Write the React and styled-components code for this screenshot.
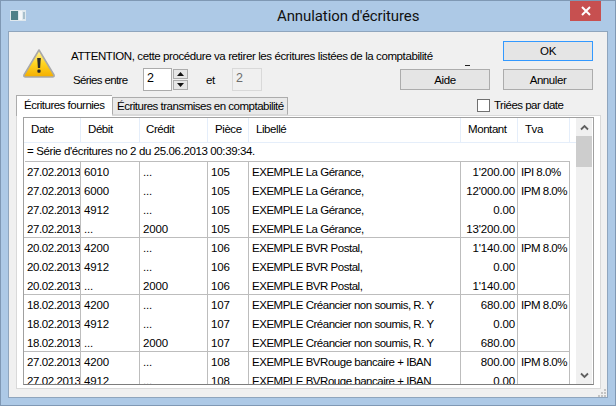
import React from "react";
import styled, { createGlobalStyle } from "styled-components";

const GlobalStyle = createGlobalStyle`
  html, body {
    margin: 0;
    padding: 0;
    background: #fff;
  }
  body {
    font-family: "Liberation Sans", Arial, sans-serif;
    font-size: 11.5px;
    letter-spacing: -0.42px;
    color: #000;
  }
`;

const COLUMNS = "57px 59px 68px 41px 212px 57px 52px";

// letter spacing per column, the dates have to fit their 57px column
const TRACKING = ["-0.4px", "-0.15px", "-0.15px", "-0.15px", "-0.48px", "-0.15px", "-0.48px"];

const Window = styled.div`
  box-sizing: border-box;
  width: 616px;
  height: 406px;
  display: flex;
  flex-direction: column;
  background: #adc9e6;
  border: 1px solid #7f98b4;
  overflow: hidden;
`;

const TitleBar = styled.div`
  height: 30px;
  flex: none;
  display: flex;
  align-items: flex-start;
  padding-left: 9px;
`;

const WindowTitle = styled.div`
  margin: 5px 0 0 251px;
  font-family: Roboto, sans-serif;
  font-size: 15px;
  letter-spacing: -0.1px;
  line-height: 20px;
  color: #111;
  width: 317px;
`;

const CloseButton = styled.div`
  width: 31px;
  height: 20px;
  background: #c75050;
  display: flex;
  align-items: center;
  justify-content: center;
  margin-left: -24px;
`;

const Client = styled.div`
  flex: 1;
  margin: 0 7px 7px;
  display: flex;
  flex-direction: column;
  background: #f0f0f0;
  border: 1px solid #8fa5bd;
  min-height: 0;
`;

const Head = styled.div`
  box-sizing: border-box;
  height: 63px;
  flex: none;
  display: flex;
  padding: 17px 0 0 14px;
`;

const WarningSlot = styled.div`
  width: 32px;
  margin-right: 16px;
`;

const Message = styled.div`
  width: 329px;
  margin-top: -1px;
`;

const MessageText = styled.div`
  line-height: 16px;
  height: 20px;
  white-space: nowrap;
  letter-spacing: -0.4px;
`;

const SeriesRow = styled.div`
  display: flex;
  align-items: center;
  height: 23px;
`;

const SeriesLabel = styled.span`
  width: 72px;
  padding-left: 2px;
  flex: none;
  box-sizing: border-box;
  letter-spacing: -0.62px;
`;

const NumberField = styled.div`
  box-sizing: border-box;
  width: ${(p) => (p.$disabled ? 30 : 29)}px;
  height: 23px;
  padding: 0 0 0 3px;
  line-height: 18px;
  font-size: 12.5px;
  background: ${(p) => (p.$disabled ? "#f0f0f0" : "#fff")};
  border: 1px solid ${(p) => (p.$disabled ? "#d9d9d9" : "#ababab")};
  color: ${(p) => (p.$disabled ? "#6d6d6d" : "#000")};
`;

const Spinner = styled.div`
  margin: 0 18px 0 1px;
  display: flex;
  flex-direction: column;
  gap: 1px;
`;

const SpinButton = styled.div`
  box-sizing: border-box;
  width: 15px;
  height: 10px;
  background: #e6e6e6;
  border: 1px solid #acacac;
  display: flex;
  align-items: center;
  justify-content: center;
`;

const AndLabel = styled.span`
  width: 26px;
  flex: none;
`;

const Actions = styled.div`
  width: 193px;
  margin-top: -8px;
  display: flex;
  flex-direction: column;
  align-items: flex-end;
`;

const ActionRow = styled.div`
  display: flex;
  gap: 13px;
`;

const Button = styled.div`
  box-sizing: border-box;
  width: 90px;
  height: ${(p) => (p.$primary ? 20 : 21)}px;
  display: flex;
  align-items: center;
  justify-content: center;
  background: #e5e5e5;
  border: 1px solid ${(p) => (p.$primary ? "#3399ff" : "#acacac")};
`;

const StrayDash = styled.div`
  width: 5px;
  height: 1px;
  background: #222;
  margin: 4px 123px 3px 0;
`;

const TabStrip = styled.div`
  flex: none;
  height: 20px;
  margin: 0 0 0 7px;
  width: 584px;
  display: flex;
  align-items: flex-end;
  position: relative;
  z-index: 1;
  letter-spacing: -0.5px;
`;

const Tab = styled.div`
  box-sizing: border-box;
  height: ${(p) => (p.$active ? 21 : 18)}px;
  margin-bottom: ${(p) => (p.$active ? -1 : 0)}px;
  padding: ${(p) => (p.$active ? "2px 7px 0" : "1px 4px 0")};
  width: ${(p) => (p.$active ? 96 : 176)}px;
  line-height: 15px;
  white-space: nowrap;
  background: ${(p) => (p.$active ? "#fff" : "#e9e9e9")};
  border: 1px solid #acacac;
  border-bottom: ${(p) => (p.$active ? "none" : "1px solid #d9d9d9")};
  border-right: ${(p) => (p.$active ? "none" : "1px solid #acacac")};
`;

const SortOption = styled.label`
  margin-left: 189px;
  align-self: center;
  display: flex;
  align-items: center;
  gap: 4px;
`;

const CheckBox = styled.span`
  box-sizing: border-box;
  display: block;
  width: 13px;
  height: 13px;
  background: #fff;
  border: 1px solid #707070;
`;

const TabPanel = styled.div`
  flex: 1;
  margin: 0 6px 0 7px;
  min-height: 0;
  display: flex;
  padding: 1px 6px 3px 6px;
  background: #fff;
  border: 1px solid #d9d9d9;
`;

const ListView = styled.div`
  flex: 1;
  display: flex;
  min-width: 0;
  border: 1px solid #a0a0a0;
  border-bottom-color: #7d7d7d;
  background: #fff;
`;

const Sheet = styled.div`
  width: 552px;
  flex: none;
  overflow: hidden;
`;

const HeaderRow = styled.div`
  height: 24px;
  display: grid;
  grid-template-columns: ${COLUMNS};
  align-items: stretch;
  background: #fff;
  border-bottom: 1px solid #e5eefa;
`;

const HeaderCell = styled.div`
  padding-left: ${(p) => p.$pad || 7}px;
  line-height: 23px;
  border-right: 1px solid #e5eefa;
`;

const BannerRow = styled.div`
  height: 18px;
  line-height: 17px;
  padding-left: 2px;
  margin-left: 1px;
  border-bottom: 1px solid #bdbdbd;
  width: 543px;
  white-space: nowrap;
  letter-spacing: -0.38px;
`;

const Group = styled.div`
  border-bottom: 1px solid #bdbdbd;
  width: 546px;
`;

const Row = styled.div`
  height: 19px;
  display: grid;
  grid-template-columns: ${COLUMNS};
  box-sizing: border-box;
  margin-bottom: ${(p) => (p.$last ? "-1px" : 0)};
`;

const Cell = styled.div`
  box-sizing: border-box;
  overflow: hidden;
  white-space: nowrap;
  line-height: 20px;
  padding: ${(p) => (p.$right ? "0 2px 0 0" : "0 0 0 3px")};
  text-align: ${(p) => (p.$right ? "right" : "left")};
  letter-spacing: ${(p) => p.$tracking};
  border-right: 1px solid #bdbdbd;
`;

const ScrollBar = styled.div`
  width: 16px;
  flex: none;
  margin-right: 1px;
  background: #f0f0f0;
  display: flex;
  flex-direction: column;
`;

const ScrollArrow = styled.div`
  height: 18px;
  flex: none;
  display: flex;
  align-items: center;
  justify-content: center;
`;

const ScrollTrack = styled.div`
  flex: 1;
`;

const ScrollThumb = styled.div`
  height: 31px;
  background: #cdcdcd;
`;

const GripRow = styled.div`
  flex: none;
  height: 8px;
  display: flex;
  justify-content: flex-end;
  padding-right: 1px;
`;

const headers = [
  ["Date", 7],
  ["Débit", 7],
  ["Crédit", 6],
  ["Pièce", 7],
  ["Libellé", 7],
  ["Montant", 7],
  ["Tva", 7],
];

const groups = [
  [
    ["27.02.2013", "6010", "...", "105", "EXEMPLE La Gérance,", "1'200.00", "IPI 8.0%"],
    ["27.02.2013", "6000", "...", "105", "EXEMPLE La Gérance,", "12'000.00", "IPM 8.0%"],
    ["27.02.2013", "4912", "...", "105", "EXEMPLE La Gérance,", "0.00", ""],
    ["27.02.2013", "...", "2000", "105", "EXEMPLE La Gérance,", "13'200.00", ""],
  ],
  [
    ["20.02.2013", "4200", "...", "106", "EXEMPLE BVR Postal,", "1'140.00", "IPM 8.0%"],
    ["20.02.2013", "4912", "...", "106", "EXEMPLE BVR Postal,", "0.00", ""],
    ["20.02.2013", "...", "2000", "106", "EXEMPLE BVR Postal,", "1'140.00", ""],
  ],
  [
    ["18.02.2013", "4200", "...", "107", "EXEMPLE Créancier non soumis, R. Y", "680.00", "IPM 8.0%"],
    ["18.02.2013", "4912", "...", "107", "EXEMPLE Créancier non soumis, R. Y", "0.00", ""],
    ["18.02.2013", "...", "2000", "107", "EXEMPLE Créancier non soumis, R. Y", "680.00", ""],
  ],
  [
    ["27.02.2013", "4200", "...", "108", "EXEMPLE BVRouge bancaire + IBAN", "800.00", "IPM 8.0%"],
    ["27.02.2013", "4912", "...", "108", "EXEMPLE BVRouge bancaire + IBAN", "0.00", ""],
  ],
];

const AppIcon = () => (
  <svg width="16" height="11" viewBox="0 0 16 11" style={{ marginTop: 9 }}>
    <rect x="0" y="0" width="16" height="11" fill="#dfe8ee" />
    <rect x="1" y="1" width="7" height="9" fill="#4f8088" />
    <rect x="9" y="1" width="3" height="9" fill="#f3f6f8" />
    <rect x="13" y="2" width="2" height="7" fill="#a9c0cc" />
  </svg>
);

const WarningIcon = () => (
  <svg width="32" height="29" viewBox="0 0 32 29">
    <defs>
      <linearGradient id="warnFill" x1="0" y1="0" x2="0" y2="1">
        <stop offset="0" stopColor="#fff3a0" />
        <stop offset="0.5" stopColor="#ffd421" />
        <stop offset="1" stopColor="#f4ae00" />
      </linearGradient>
    </defs>
    <path d="M16 1 L31 26 Q31.5 28 29.5 28 L2.5 28 Q0.5 28 1 26 Z" fill="url(#warnFill)" stroke="#a8a8a8" strokeWidth="1.6" strokeLinejoin="round" />
    <path d="M14.2 9 h3.6 l-0.7 10 h-2.2 Z" fill="#2a2a2a" />
    <rect x="14.4" y="20.5" width="3.2" height="3.2" rx="1" fill="#2a2a2a" />
  </svg>
);

const Triangle = ({ down }) => (
  <svg width="7" height="4" viewBox="0 0 7 4">
    <path d={down ? "M0 0 H7 L3.5 4 Z" : "M0 4 H7 L3.5 0 Z"} fill="#111" />
  </svg>
);

const Chevron = ({ down }) => (
  <svg width="9" height="7" viewBox="0 0 9 7">
    <path
      d={down ? "M1 1.5 L4.5 5 L8 1.5" : "M1 5.5 L4.5 2 L8 5.5"}
      fill="none"
      stroke="#606060"
      strokeWidth="1.8"
    />
  </svg>
);

const ResizeGrip = () => (
  <svg width="8" height="8" viewBox="0 0 8 8">
    <path d="M6 0h2v2h-2z M3 3h2v2h-2z M6 3h2v2h-2z M0 6h2v2h-2z M3 6h2v2h-2z M6 6h2v2h-2z" fill="#c4c4c4" />
  </svg>
);

export default function App() {
  return (
    <>
      <GlobalStyle />
      <Window>
        <TitleBar>
          <AppIcon />
          <WindowTitle>Annulation d'écritures</WindowTitle>
          <CloseButton>
            <svg width="10" height="10" viewBox="0 0 10 10">
              <path d="M1 1 L9 9 M9 1 L1 9" stroke="#fff" strokeWidth="2" />
            </svg>
          </CloseButton>
        </TitleBar>
        <Client>
          <Head>
            <WarningSlot>
              <WarningIcon />
            </WarningSlot>
            <Message>
              <MessageText>ATTENTION, cette procédure va retirer les écritures listées de la comptabilité</MessageText>
              <SeriesRow>
                <SeriesLabel>Séries entre</SeriesLabel>
                <NumberField>2</NumberField>
                <Spinner>
                  <SpinButton><Triangle /></SpinButton>
                  <SpinButton><Triangle down /></SpinButton>
                </Spinner>
                <AndLabel>et</AndLabel>
                <NumberField $disabled>2</NumberField>
              </SeriesRow>
            </Message>
            <Actions>
              <Button $primary>OK</Button>
              <StrayDash />
              <ActionRow>
                <Button>Aide</Button>
                <Button>Annuler</Button>
              </ActionRow>
            </Actions>
          </Head>
          <TabStrip>
            <Tab $active>Écritures fournies</Tab>
            <Tab>Écritures transmises en comptabilité</Tab>
            <SortOption>
              <CheckBox />
              Triées par date
            </SortOption>
          </TabStrip>
          <TabPanel>
            <ListView>
              <Sheet>
                <HeaderRow>
                  {headers.map(([label, pad]) => (
                    <HeaderCell key={label} $pad={pad}>{label}</HeaderCell>
                  ))}
                </HeaderRow>
                <BannerRow>= Série d'écritures no 2 du 25.06.2013 00:39:34.</BannerRow>
                {groups.map((group, g) => (
                  <Group key={g}>
                    {group.map((row, r) => (
                      <Row key={r} $last={r === group.length - 1}>
                        {row.map((value, c) => (
                          <Cell key={c} $right={c === 5} $tracking={TRACKING[c]}>{value}</Cell>
                        ))}
                      </Row>
                    ))}
                  </Group>
                ))}
              </Sheet>
              <ScrollBar>
                <ScrollArrow><Chevron /></ScrollArrow>
                <ScrollThumb />
                <ScrollTrack />
                <ScrollArrow><Chevron down /></ScrollArrow>
              </ScrollBar>
            </ListView>
          </TabPanel>
          <GripRow><ResizeGrip /></GripRow>
        </Client>
      </Window>
    </>
  );
}
